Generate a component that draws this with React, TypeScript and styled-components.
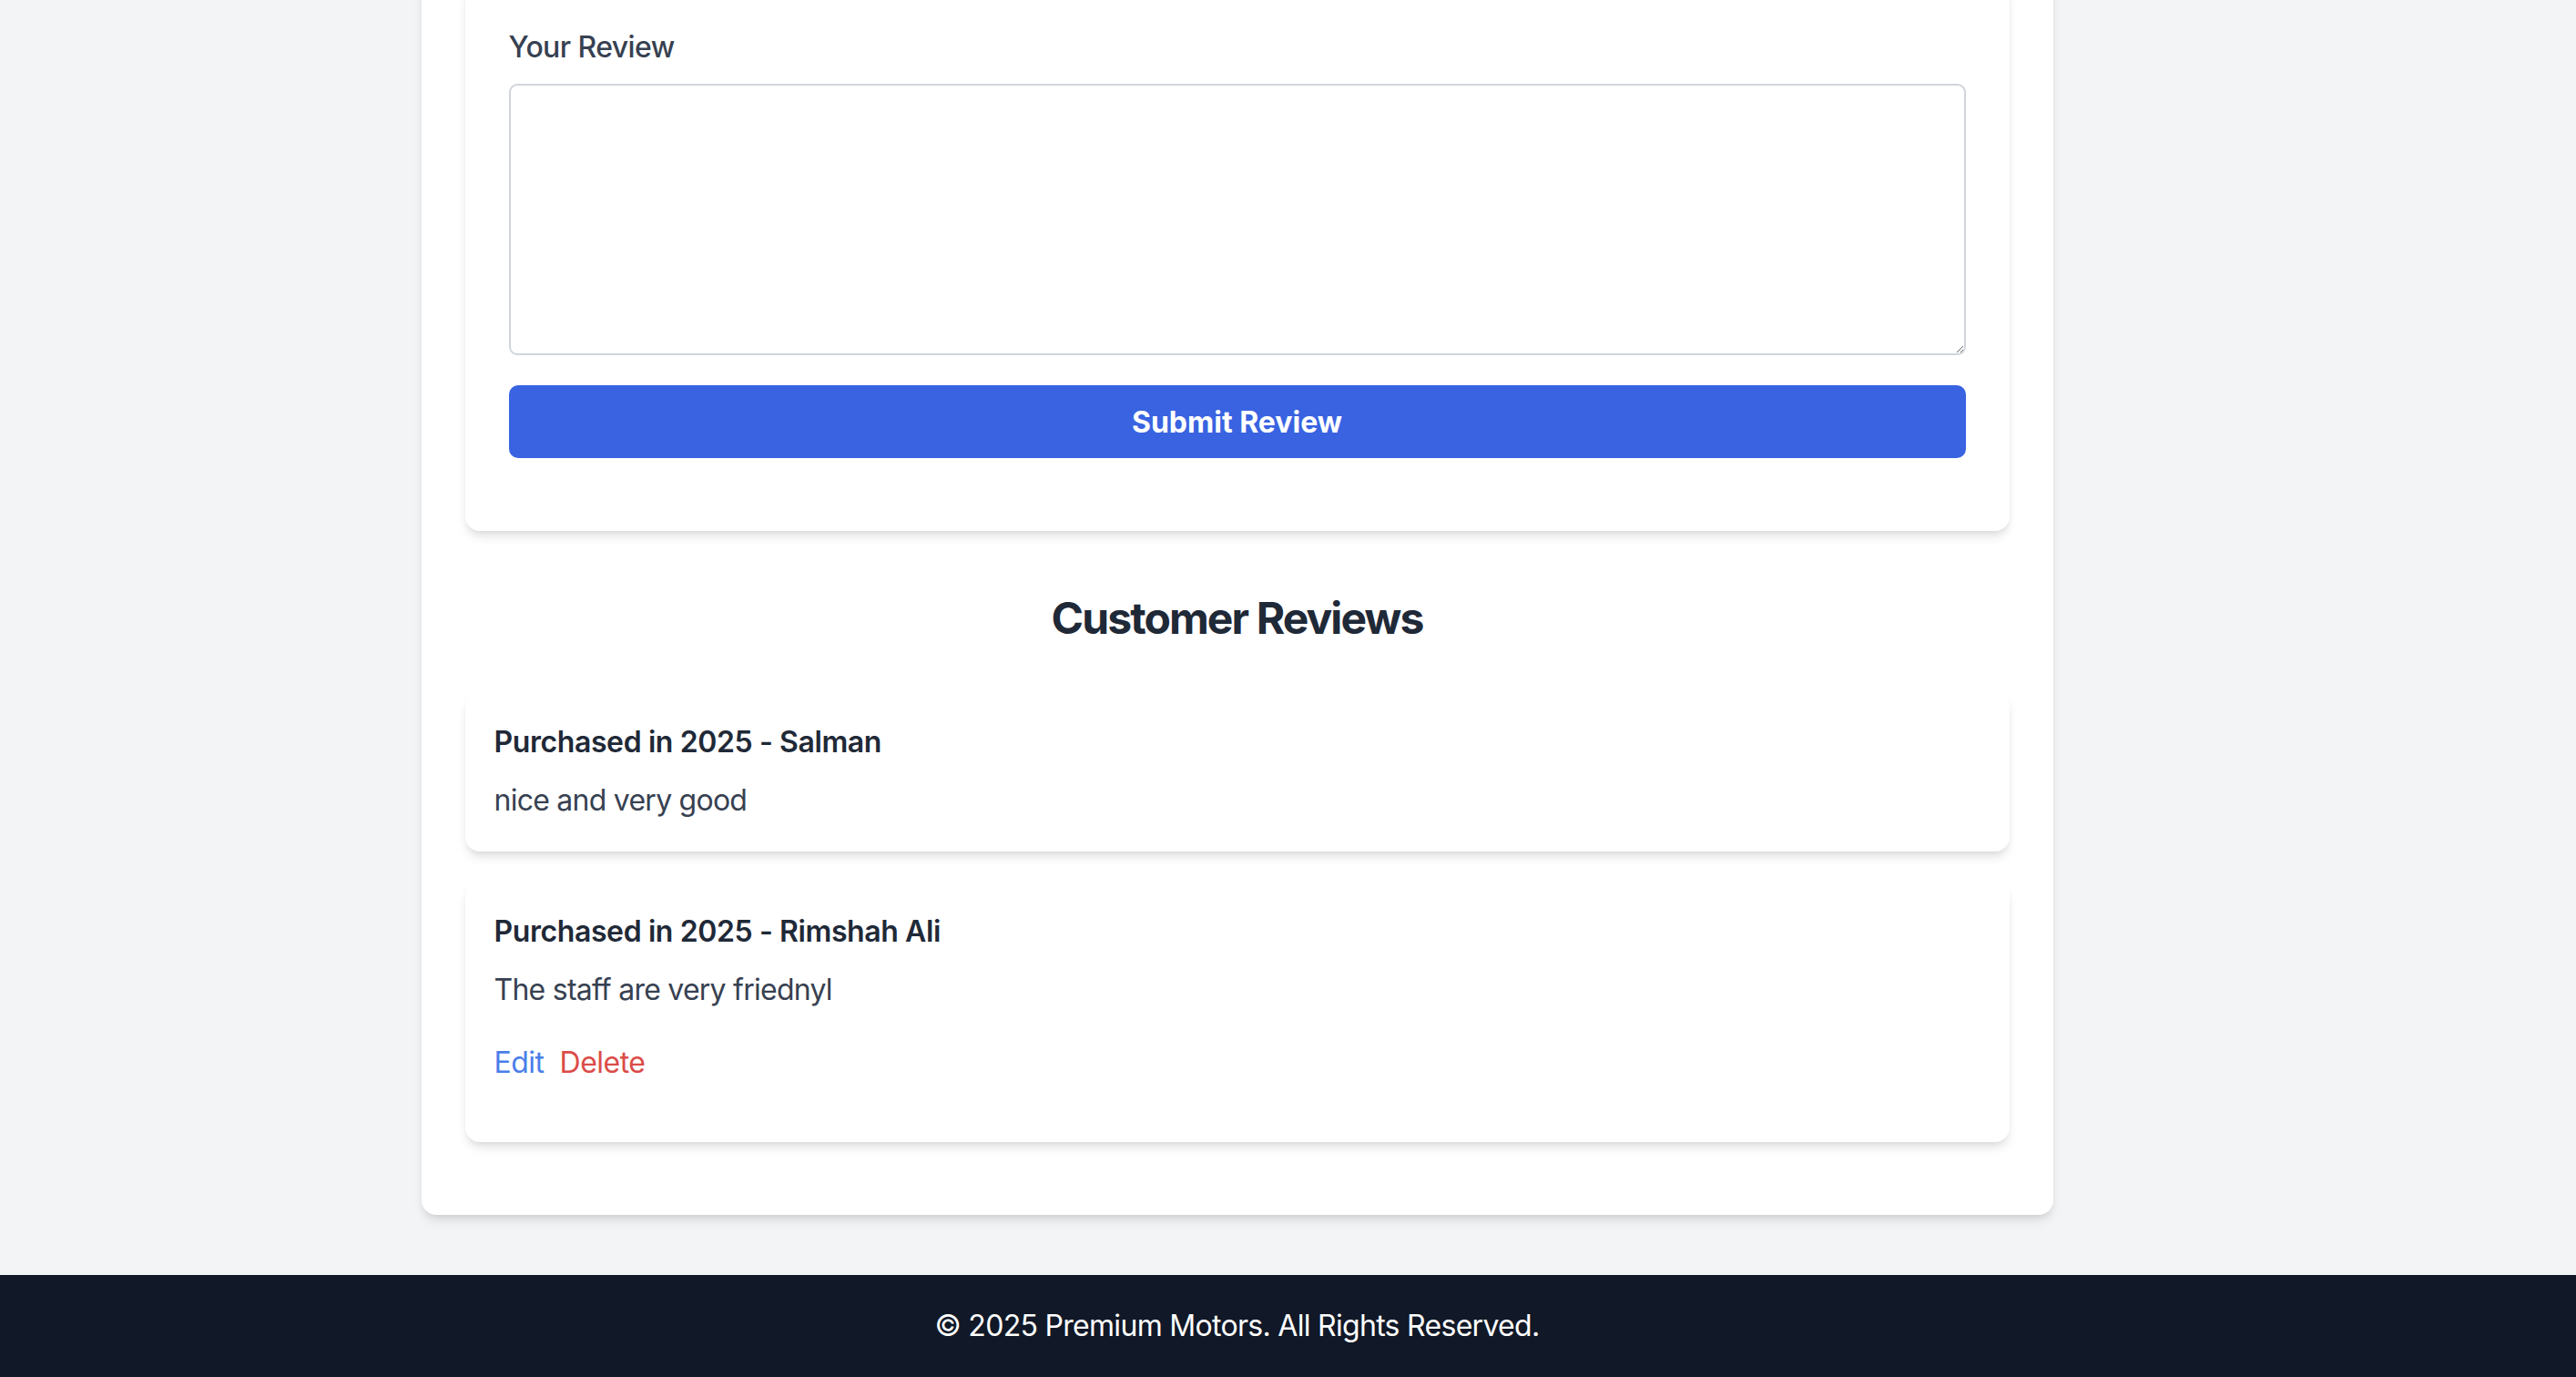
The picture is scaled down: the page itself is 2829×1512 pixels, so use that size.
import React from "react";
import styled, { createGlobalStyle } from "styled-components";

const GlobalStyle = createGlobalStyle`
  html, body {
    margin: 0;
    padding: 0;
    background: #f3f4f6;
    font-family: Inter, "Noto Sans", "Liberation Sans", sans-serif;
    color: #374151;
  }
  * { box-sizing: border-box; }
`;

const Page = styled.div`
  min-height: 1512px;
  display: flex;
  flex-direction: column;
  overflow: hidden;
`;

const Main = styled.main`
  width: calc(100% - 112px);
  margin-top: -68px;
  padding-bottom: 64px;
  display: flex;
  justify-content: center;
`;

const OuterCard = styled.div`
  width: 1792px;
  background: #ffffff;
  border-radius: 16px;
  box-shadow: 0 8px 12px -2px rgba(0, 0, 0, 0.1), 0 4px 8px -4px rgba(0, 0, 0, 0.1);
  padding: 48px 48px 80px;
`;

const FormCard = styled.form`
  background: #ffffff;
  border-radius: 16px;
  box-shadow: 0 8px 12px -2px rgba(0, 0, 0, 0.1), 0 4px 8px -4px rgba(0, 0, 0, 0.1);
  padding: 48px 48px 80px;
  display: flex;
  flex-direction: column;
`;

const Label = styled.label`
  font-size: 32px;
  line-height: 48px;
  font-weight: 500;
  letter-spacing: -0.6px;
  color: #374151;
  margin-bottom: 16px;
`;

const TextArea = styled.textarea`
  display: block;
  width: 100%;
  height: 298px;
  border: 2px solid #d1d5db;
  border-radius: 9px;
  padding: 16px;
  font-family: inherit;
  font-size: 32px;
  margin-bottom: 33px;
  outline: none;
`;

const SubmitButton = styled.button`
  height: 80px;
  width: 100%;
  border: none;
  border-radius: 10px;
  background: #3963e1;
  color: #ffffff;
  font-family: inherit;
  font-size: 32px;
  font-weight: 700;
  cursor: pointer;
`;

const SectionTitle = styled.h2`
  margin: 64px 0 48px;
  text-align: center;
  font-size: 48px;
  line-height: 64px;
  font-weight: 700;
  letter-spacing: -1.9px;
  color: #1f2937;
`;

const ReviewList = styled.div`
  display: flex;
  flex-direction: column;
  gap: 32px;
`;

const ReviewCard = styled.div`
  background: #ffffff;
  border-radius: 16px;
  box-shadow: 0 8px 12px -2px rgba(0, 0, 0, 0.1), 0 4px 8px -4px rgba(0, 0, 0, 0.1);
  padding: 32px;
`;

const ReviewTitle = styled.h3`
  margin: 0 0 16px;
  font-size: 32px;
  line-height: 48px;
  font-weight: 600;
  letter-spacing: -0.4px;
  color: #1f2937;
`;

const ReviewText = styled.p`
  margin: 0;
  font-size: 32px;
  line-height: 48px;
  letter-spacing: -0.75px;
  color: #374151;
`;

const Actions = styled.div`
  display: flex;
  gap: 17px;
  margin-top: 32px;
  padding-bottom: 31px;
`;

const ActionButton = styled.button<{ $tone: "edit" | "delete" }>`
  background: none;
  border: none;
  padding: 0;
  font-family: inherit;
  font-size: 32px;
  line-height: 48px;
  letter-spacing: -0.5px;
  color: ${(p) => (p.$tone === "edit" ? "#4a7ee9" : "#db4c48")};
  cursor: pointer;
`;

const Footer = styled.footer`
  margin-top: auto;
  background: #111827;
  padding: 32px 0;
`;

const FooterText = styled.p`
  width: calc(100% - 112px);
  margin: 0;
  text-align: center;
  color: #ffffff;
  font-size: 32px;
  line-height: 48px;
  letter-spacing: -0.7px;
`;

type Review = { year: number; name: string; text: string; own?: boolean };

const reviews: Review[] = [
  { year: 2025, name: "Salman", text: "nice and very good" },
  { year: 2025, name: "Rimshah Ali", text: "The staff are very friednyl", own: true },
];

export default function App() {
  return (
    <>
      <GlobalStyle />
      <Page>
        <Main>
          <OuterCard>
            <FormCard onSubmit={(e) => e.preventDefault()}>
              <Label htmlFor="review">Your Review</Label>
              <TextArea id="review" />
              <SubmitButton type="submit">Submit Review</SubmitButton>
            </FormCard>
            <SectionTitle>Customer Reviews</SectionTitle>
            <ReviewList>
              {reviews.map((r) => (
                <ReviewCard key={r.name}>
                  <ReviewTitle>
                    Purchased in {r.year} - {r.name}
                  </ReviewTitle>
                  <ReviewText>{r.text}</ReviewText>
                  {r.own && (
                    <Actions>
                      <ActionButton $tone="edit">Edit</ActionButton>
                      <ActionButton $tone="delete">Delete</ActionButton>
                    </Actions>
                  )}
                </ReviewCard>
              ))}
            </ReviewList>
          </OuterCard>
        </Main>
        <Footer>
          <FooterText>© 2025 Premium Motors. All Rights Reserved.</FooterText>
        </Footer>
      </Page>
    </>
  );
}
